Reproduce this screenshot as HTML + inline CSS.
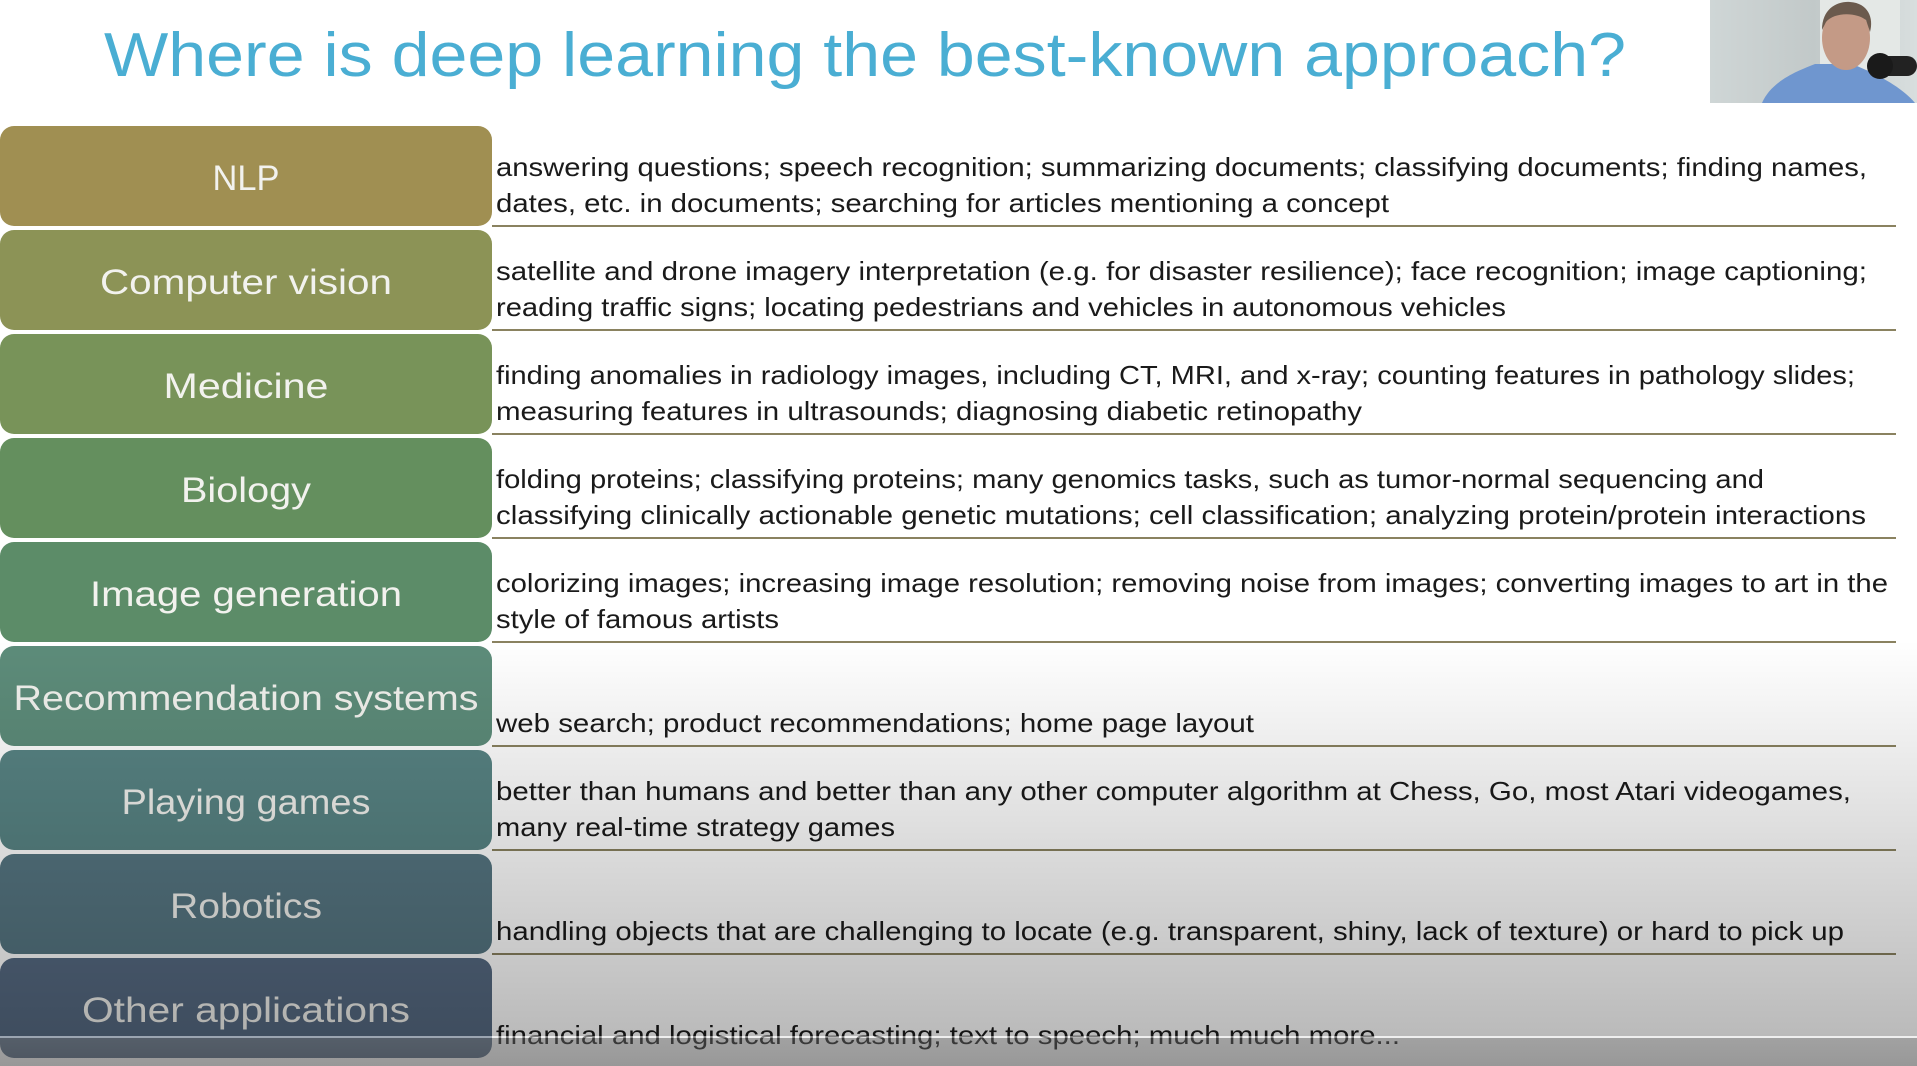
<!DOCTYPE html>
<html><head><meta charset="utf-8"><style>
html,body{margin:0;padding:0;width:1917px;height:1066px;overflow:hidden;background:#fff}
svg{display:block}
.l{font-family:"Liberation Sans",sans-serif;font-size:35px;fill:#f2f2ee}
.t{font-family:"Liberation Sans",sans-serif;font-size:26px;fill:#1a1a1a}
</style></head><body>
<svg width="1917" height="1066" viewBox="0 0 1917 1066" xmlns="http://www.w3.org/2000/svg">
<defs>
<linearGradient id="ov" x1="0" y1="0" x2="0" y2="1">
<stop offset="0" stop-color="#000" stop-opacity="0"/>
<stop offset="1" stop-color="#000" stop-opacity="0.27"/>
</linearGradient>
<linearGradient id="bar" x1="0" y1="0" x2="0" y2="1">
<stop offset="0" stop-color="#555"/>
<stop offset="1" stop-color="#444"/>
</linearGradient>
<linearGradient id="cam" x1="0" y1="0" x2="1" y2="0">
<stop offset="0" stop-color="#cfd6d6"/>
<stop offset="0.5" stop-color="#c2c9c9"/>
<stop offset="1" stop-color="#d8dede"/>
</linearGradient>
</defs>
<rect width="1917" height="1066" fill="#fff"/>
<text x="104" y="76" font-family="Liberation Sans, sans-serif" font-size="62" fill="#4aaed3" textLength="1522" lengthAdjust="spacingAndGlyphs">Where is deep learning the best-known approach?</text>
<!-- webcam -->
<rect x="1710" y="0" width="207" height="103" fill="url(#cam)"/>
<rect x="1820" y="0" width="80" height="70" fill="#e4e8e6"/>
<path d="M1762 103 C1772 80 1800 70 1815 64 L1852 64 C1872 72 1900 85 1915 103 Z" fill="#6f96cf"/>
<ellipse cx="1846" cy="38" rx="24" ry="32" fill="#c49a86"/>
<path d="M1822 30 C1822 8 1838 1 1850 2 C1868 3 1874 18 1870 32 L1866 20 C1856 12 1834 12 1826 22 Z" fill="#6b5a4d"/>
<rect x="1875" y="56" width="42" height="20" rx="10" fill="#222"/>
<ellipse cx="1880" cy="66" rx="13" ry="13" fill="#1a1a1a"/>
<!-- rows -->
<g>
<rect x="0" y="126" width="492" height="100" rx="14" fill="#a08f52"/>
<rect x="0" y="230" width="492" height="100" rx="14" fill="#8c9356"/>
<rect x="0" y="334" width="492" height="100" rx="14" fill="#789359"/>
<rect x="0" y="438" width="492" height="100" rx="14" fill="#648f5e"/>
<rect x="0" y="542" width="492" height="100" rx="14" fill="#5c8c68"/>
<rect x="0" y="646" width="492" height="100" rx="14" fill="#5d8c7a"/>
<rect x="0" y="750" width="492" height="100" rx="14" fill="#588484"/>
<rect x="0" y="854" width="492" height="100" rx="14" fill="#567682"/>
<rect x="0" y="958" width="492" height="100" rx="14" fill="#566a82"/>
</g>
<g fill="#8a8260">
<rect x="492" y="225" width="1404" height="2"/>
<rect x="492" y="329" width="1404" height="2"/>
<rect x="492" y="433" width="1404" height="2"/>
<rect x="492" y="537" width="1404" height="2"/>
<rect x="492" y="641" width="1404" height="2"/>
<rect x="492" y="745" width="1404" height="2"/>
<rect x="492" y="849" width="1404" height="2"/>
<rect x="492" y="953" width="1404" height="2"/>
</g>
<g class="l" text-anchor="middle">
<text class="l" x="246" y="190" textLength="67" lengthAdjust="spacingAndGlyphs">NLP</text>
<text class="l" x="246" y="294" textLength="292" lengthAdjust="spacingAndGlyphs">Computer vision</text>
<text class="l" x="246" y="398" textLength="165" lengthAdjust="spacingAndGlyphs">Medicine</text>
<text class="l" x="246" y="502" textLength="130" lengthAdjust="spacingAndGlyphs">Biology</text>
<text class="l" x="246" y="606" textLength="312" lengthAdjust="spacingAndGlyphs">Image generation</text>
<text class="l" x="246" y="710" textLength="465" lengthAdjust="spacingAndGlyphs">Recommendation systems</text>
<text class="l" x="246" y="814" textLength="249" lengthAdjust="spacingAndGlyphs">Playing games</text>
<text class="l" x="246" y="918" textLength="152" lengthAdjust="spacingAndGlyphs">Robotics</text>
<text class="l" x="246" y="1022" textLength="328" lengthAdjust="spacingAndGlyphs">Other applications</text>
</g>
<g>
<text class="t" x="496" y="176" textLength="1371" lengthAdjust="spacingAndGlyphs">answering questions; speech recognition; summarizing documents; classifying documents; finding names,</text>
<text class="t" x="496" y="212" textLength="893" lengthAdjust="spacingAndGlyphs">dates, etc. in documents; searching for articles mentioning a concept</text>
<text class="t" x="496" y="280" textLength="1371" lengthAdjust="spacingAndGlyphs">satellite and drone imagery interpretation (e.g. for disaster resilience); face recognition; image captioning;</text>
<text class="t" x="496" y="316" textLength="1010" lengthAdjust="spacingAndGlyphs">reading traffic signs; locating pedestrians and vehicles in autonomous vehicles</text>
<text class="t" x="496" y="384" textLength="1359" lengthAdjust="spacingAndGlyphs">finding anomalies in radiology images, including CT, MRI, and x-ray; counting features in pathology slides;</text>
<text class="t" x="496" y="420" textLength="866" lengthAdjust="spacingAndGlyphs">measuring features in ultrasounds; diagnosing diabetic retinopathy</text>
<text class="t" x="496" y="488" textLength="1268" lengthAdjust="spacingAndGlyphs">folding proteins; classifying proteins; many genomics tasks, such as tumor-normal sequencing and</text>
<text class="t" x="496" y="524" textLength="1370" lengthAdjust="spacingAndGlyphs">classifying clinically actionable genetic mutations; cell classification; analyzing protein/protein interactions</text>
<text class="t" x="496" y="592" textLength="1392" lengthAdjust="spacingAndGlyphs">colorizing images; increasing image resolution; removing noise from images; converting images to art in the</text>
<text class="t" x="496" y="628" textLength="283" lengthAdjust="spacingAndGlyphs">style of famous artists</text>
<text class="t" x="496" y="732" textLength="758" lengthAdjust="spacingAndGlyphs">web search; product recommendations; home page layout</text>
<text class="t" x="496" y="800" textLength="1355" lengthAdjust="spacingAndGlyphs">better than humans and better than any other computer algorithm at Chess, Go, most Atari videogames,</text>
<text class="t" x="496" y="836" textLength="399" lengthAdjust="spacingAndGlyphs">many real-time strategy games</text>
<text class="t" x="496" y="940" textLength="1348" lengthAdjust="spacingAndGlyphs">handling objects that are challenging to locate (e.g. transparent, shiny, lack of texture) or hard to pick up</text>
<text class="t" x="496" y="1044" textLength="904" lengthAdjust="spacingAndGlyphs">financial and logistical forecasting; text to speech; much much more...</text>
</g>
<!-- video overlay -->
<rect x="0" y="640" width="1917" height="396" fill="url(#ov)"/>
<rect x="0" y="1036" width="1917" height="2" fill="#e0e0e0" opacity="0.5"/>
<rect x="0" y="1038" width="1917" height="28" fill="url(#bar)" opacity="0.55"/>
</svg>
</body></html>
